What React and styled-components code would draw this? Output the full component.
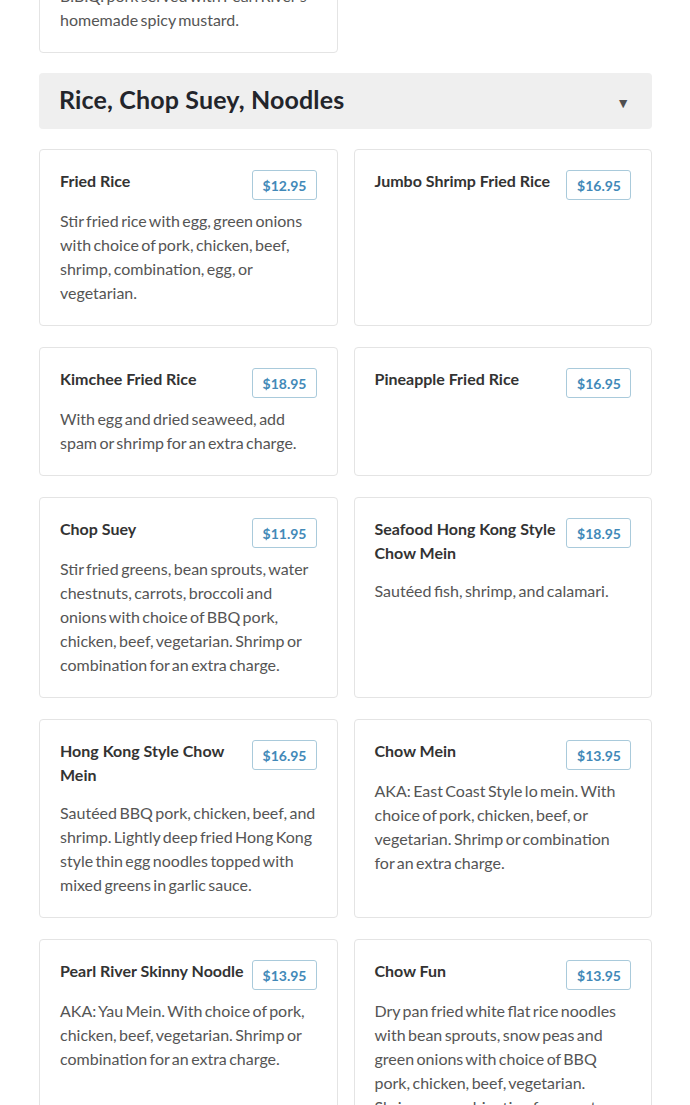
import React from "react";
import styled, { createGlobalStyle } from "styled-components";

const Global = createGlobalStyle`
  html, body { margin: 0; padding: 0; background: #ffffff; }
  body { font-family: Lato, "Open Sans", sans-serif; -webkit-font-smoothing: antialiased; }
  * { box-sizing: border-box; }
`;

const Page = styled.main`
  width: 613px;
  margin: -76px 0 0 39px;
  display: flex;
  flex-direction: column;
  gap: 20px;
`;

const Grid = styled.section`
  display: grid;
  grid-template-columns: 1fr 1fr;
  column-gap: 16px;
  row-gap: 21px;
`;

const Card = styled.article`
  background: #fff;
  border: 1px solid #e4e4e4;
  border-radius: 4px;
  padding: 19px 20px 20px;
`;

const CardHead = styled.div`
  display: flex;
  align-items: flex-start;
  justify-content: space-between;
  gap: 6px;
`;

const Title = styled.h3`
  margin: 0 0 14px;
  font-size: 16px;
  line-height: 24px;
  font-weight: 700;
  color: #333333;
`;

const Price = styled.span`
  flex: none;
  margin: 1px 0 9px;
  height: 30px;
  padding: 0 9px 0 10px;
  display: inline-flex;
  align-items: center;
  border: 1px solid #a9cadb;
  border-radius: 3px;
  font-size: 14px;
  font-weight: 700;
  color: #4289b8;
`;

const Desc = styled.p`
  margin: 0;
  font-size: 16px;
  line-height: 24px;
  letter-spacing: 0;
  word-spacing: -1.7px;
  color: #555555;
`;

const SectionHeader = styled.header`
  height: 56px;
  padding: 0 20px;
  background: #efefef;
  border-radius: 4px;
  display: flex;
  align-items: center;
  justify-content: space-between;
`;

const SectionTitle = styled.h2`
  margin: 0 0 4px;
  font-size: 25px;
  line-height: 30px;
  font-weight: 700;
  color: #23252b;
  letter-spacing: 0.15px;
`;

const Caret = styled.span`
  font-size: 14px;
  color: #4f4f4f;
  margin-right: 2px;
  margin-top: 2px;
`;

const prev = [
  {
    name: "BBQ Pork",
    price: "$12.95",
    desc: "B.B.Q. pork served with Pearl River's homemade spicy mustard.",
  },
];

const items = [
  {
    name: "Fried Rice",
    price: "$12.95",
    desc: "Stir fried rice with egg, green onions with choice of pork, chicken, beef, shrimp, combination, egg, or vegetarian.",
  },
  { name: "Jumbo Shrimp Fried Rice", price: "$16.95", desc: "" },
  {
    name: "Kimchee Fried Rice",
    price: "$18.95",
    desc: "With egg and dried seaweed, add spam or shrimp for an extra charge.",
  },
  { name: "Pineapple Fried Rice", price: "$16.95", desc: "" },
  {
    name: "Chop Suey",
    price: "$11.95",
    desc: "Stir fried greens, bean sprouts, water chestnuts, carrots, broccoli and onions with choice of BBQ pork, chicken, beef, vegetarian. Shrimp or combination for an extra charge.",
  },
  {
    name: "Seafood Hong Kong Style Chow Mein",
    price: "$18.95",
    desc: "Sautéed fish, shrimp, and calamari.",
  },
  {
    name: "Hong Kong Style Chow Mein",
    price: "$16.95",
    desc: "Sautéed BBQ pork, chicken, beef, and shrimp. Lightly deep fried Hong Kong style thin egg noodles topped with mixed greens in garlic sauce.",
  },
  {
    name: "Chow Mein",
    price: "$13.95",
    desc: "AKA: East Coast Style lo mein. With choice of pork, chicken, beef, or vegetarian. Shrimp or combination for an extra charge.",
  },
  {
    name: "Pearl River Skinny Noodle",
    price: "$13.95",
    desc: "AKA: Yau Mein. With choice of pork, chicken, beef, vegetarian. Shrimp or combination for an extra charge.",
  },
  {
    name: "Chow Fun",
    price: "$13.95",
    desc: "Dry pan fried white flat rice noodles with bean sprouts, snow peas and green onions with choice of BBQ pork, chicken, beef, vegetarian. Shrimp or combination for an extra charge.",
  },
];

function MenuCard({ item }) {
  return (
    <Card>
      <CardHead>
        <Title>{item.name}</Title>
        <Price>{item.price}</Price>
      </CardHead>
      {item.desc && <Desc>{item.desc}</Desc>}
    </Card>
  );
}

export default function App() {
  return (
    <>
      <Global />
      <Page>
        <Grid>
          {prev.map((it) => (
            <MenuCard key={it.name} item={it} />
          ))}
        </Grid>
        <SectionHeader>
          <SectionTitle>Rice, Chop Suey, Noodles</SectionTitle>
          <Caret>▼</Caret>
        </SectionHeader>
        <Grid>
          {items.map((it) => (
            <MenuCard key={it.name} item={it} />
          ))}
        </Grid>
      </Page>
    </>
  );
}
